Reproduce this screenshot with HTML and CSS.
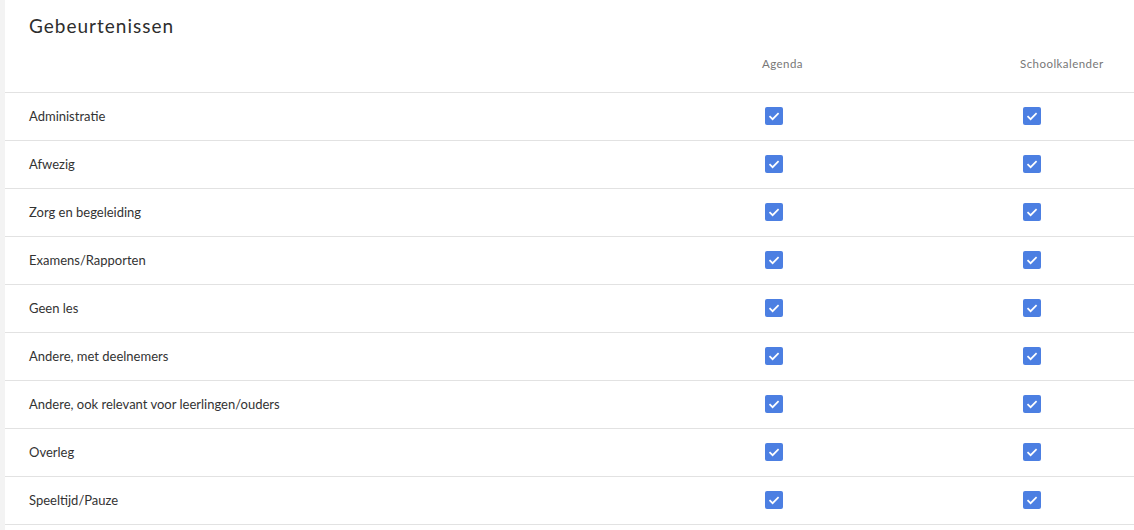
FILE: index.html
```html
<!DOCTYPE html>
<html>
<head>
<meta charset="utf-8">
<link rel="stylesheet" href="styles.css">
</head>
<body>
<div class="card">
  <h1 class="title">Gebeurtenissen</h1>
  <div class="grid">
    <div class="head"></div>
    <div class="head">Agenda</div>
    <div class="head">Schoolkalender</div>

    <div class="cell label">Administratie</div>
    <div class="cell"><span class="cb"></span></div>
    <div class="cell"><span class="cb"></span></div>

    <div class="cell label">Afwezig</div>
    <div class="cell"><span class="cb"></span></div>
    <div class="cell"><span class="cb"></span></div>

    <div class="cell label">Zorg en begeleiding</div>
    <div class="cell"><span class="cb"></span></div>
    <div class="cell"><span class="cb"></span></div>

    <div class="cell label">Examens/Rapporten</div>
    <div class="cell"><span class="cb"></span></div>
    <div class="cell"><span class="cb"></span></div>

    <div class="cell label">Geen les</div>
    <div class="cell"><span class="cb"></span></div>
    <div class="cell"><span class="cb"></span></div>

    <div class="cell label">Andere, met deelnemers</div>
    <div class="cell"><span class="cb"></span></div>
    <div class="cell"><span class="cb"></span></div>

    <div class="cell label">Andere, ook relevant voor leerlingen/ouders</div>
    <div class="cell"><span class="cb"></span></div>
    <div class="cell"><span class="cb"></span></div>

    <div class="cell label">Overleg</div>
    <div class="cell"><span class="cb"></span></div>
    <div class="cell"><span class="cb"></span></div>

    <div class="cell label">Speeltijd/Pauze</div>
    <div class="cell"><span class="cb"></span></div>
    <div class="cell"><span class="cb"></span></div>
  </div>
</div>
</body>
</html>
```
FILE: styles.css
```css
html, body {
  margin: 0;
  padding: 0;
  background: #f3f3f3;
  font-family: Lato, "Open Sans", sans-serif;
  color: #333;
}
.card {
  margin-left: 5px;
  background: #fff;
  min-height: 530px;
}
.title {
  margin: 0;
  padding: 14px 0 0 24px;
  font-size: 19px;
  font-weight: 400;
  letter-spacing: 1px;
  line-height: 24px;
  color: #2d2d2d;
}
.grid {
  display: grid;
  grid-template-columns: 1fr 258px 114px;
}
.head {
  height: 55px;
  padding-top: 18px;
  box-sizing: border-box;
  font-size: 11.5px;
  letter-spacing: 0.45px;
  line-height: 16px;
  color: #777;
  border-bottom: 1px solid #e2e2e2;
}
.cell {
  height: 48px;
  box-sizing: border-box;
  border-bottom: 1px solid #e2e2e2;
  display: flex;
  align-items: center;
  font-size: 13px;
}
.label {
  padding-left: 24px;
  padding-bottom: 1px;
}
.cb {
  display: block;
  width: 18px;
  height: 18px;
  margin-left: 3px;
  margin-top: -1px;
  border-radius: 2px;
  background: #4c7fe2 url("data:image/svg+xml;utf8,<svg xmlns='http://www.w3.org/2000/svg' width='18' height='18'><path d='M4.5 9.2 L7.6 12.2 L13.6 6.2' fill='none' stroke='white' stroke-width='1.7'/></svg>") no-repeat center;
}
```
